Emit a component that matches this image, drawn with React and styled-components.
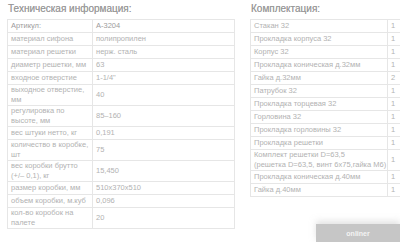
import styled, { createGlobalStyle } from "styled-components";

const GlobalStyle = createGlobalStyle`
  html, body {
    margin: 0;
    padding: 0;
    background: #ffffff;
    overflow: hidden;
  }
  body {
    font-family: "Liberation Sans", Arial, sans-serif;
  }
`;

const Page = styled.div`
  position: relative;
  width: 400px;
  height: 242px;
  overflow: hidden;
`;

const Columns = styled.div`
  display: flex;
  align-items: flex-start;
  gap: 15px;
  width: 420px;
  padding-left: 7px;
`;

const Section = styled.div`
  display: flex;
  flex-direction: column;
  flex-shrink: 0;
`;

const SectionTitle = styled.div`
  height: 19px;
  line-height: 18px;
  padding-left: 1px;
  font-size: 10px;
  color: #999999;
  white-space: nowrap;
  text-shadow: 0 0 0.4px #b0b0b0;
`;

const Table = styled.table`
  border-collapse: collapse;
  table-layout: fixed;
  width: ${(p) => p.$width}px;
`;

const Cell = styled.td`
  border: 1px solid #e6e6e6;
  height: 12px;
  padding: 0 1px 0 3px;
  font-size: 7.5px;
  line-height: 10px;
  color: ${(p) => (p.$strong ? "#9c9c9c" : "#b2b2b2")};
  vertical-align: middle;
  white-space: ${(p) => (p.$fixedLines ? "pre" : "normal")};
  overflow: hidden;
`;

const Watermark = styled.div`
  position: absolute;
  right: 0;
  bottom: 0;
  width: 84px;
  height: 18px;
  background: #c6c6c6;
  box-shadow: 0 -3px 6px rgba(200, 200, 200, 0.5);
  display: flex;
  align-items: center;
  justify-content: center;
  font-size: 7px;
  font-weight: bold;
  color: #f4f4f4;
`;

const specs = [
  ["Артикул:", "А-3204"],
  ["материал сифона", "полипропилен"],
  ["материал решетки", "нерж. сталь"],
  ["диаметр решетки, мм", "63"],
  ["входное отверстие", "1-1/4\""],
  ["выходное отверстие, мм", "40"],
  ["регулировка по высоте, мм", "85–160"],
  ["вес штуки нетто, кг", "0,191"],
  ["количество в коробке, шт", "75"],
  ["вес коробки брутто (+/– 0,1), кг", "15,450"],
  ["размер коробки, мм", "510x370x510"],
  ["объем коробки, м.куб", "0,096"],
  ["кол-во коробок на палете", "20"],
];

const parts = [
  ["Стакан 32", "1"],
  ["Прокладка корпуса 32", "1"],
  ["Корпус 32", "1"],
  ["Прокладка коническая д.32мм", "1"],
  ["Гайка д.32мм", "2"],
  ["Патрубок 32", "1"],
  ["Прокладка торцевая 32", "1"],
  ["Горловина 32", "1"],
  ["Прокладка горловины 32", "1"],
  ["Прокладка решетки", "1"],
  ["Комплект решетки D=63,5\n(решетка D=63,5, винт 6x75,гайка М6)", "1"],
  ["Прокладка коническая д.40мм", "1"],
  ["Гайка д.40мм", "1"],
];

export default function App() {
  return (
    <>
      <GlobalStyle />
      <Page>
        <Columns>
          <Section>
            <SectionTitle>Техническая информация:</SectionTitle>
            <Table $width={228}>
              <colgroup>
                <col style={{ width: 85 }} />
                <col />
              </colgroup>
              <tbody>
                {specs.map(([label, value], i) => (
                  <tr key={label}>
                    <Cell $strong={i === 0}>{label}</Cell>
                    <Cell $strong={i === 0}>{value}</Cell>
                  </tr>
                ))}
              </tbody>
            </Table>
          </Section>
          <Section>
            <SectionTitle>Комплектация:</SectionTitle>
            <Table $width={160}>
              <colgroup>
                <col style={{ width: 137 }} />
                <col />
              </colgroup>
              <tbody>
                {parts.map(([label, count]) => (
                  <tr key={label}>
                    <Cell $fixedLines>{label}</Cell>
                    <Cell>{count}</Cell>
                  </tr>
                ))}
              </tbody>
            </Table>
          </Section>
        </Columns>
        <Watermark>onliner</Watermark>
      </Page>
    </>
  );
}
